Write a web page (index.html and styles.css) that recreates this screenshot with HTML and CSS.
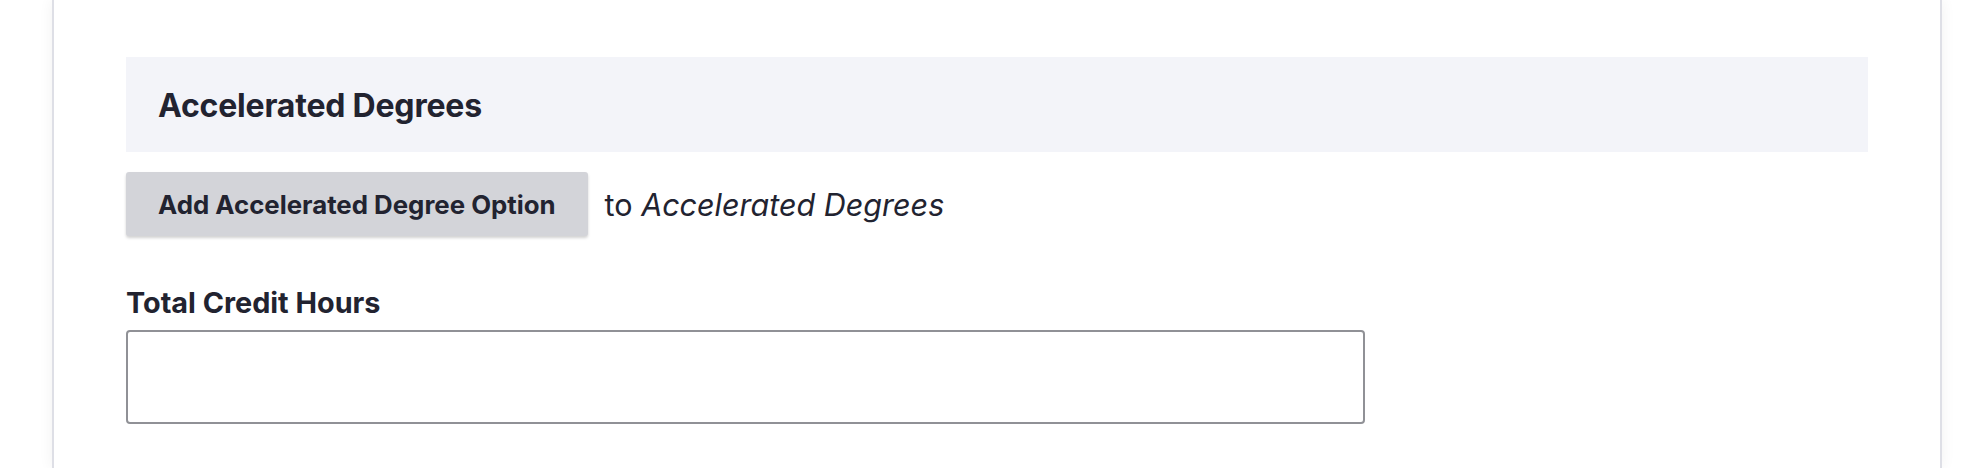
FILE: index.html
```html
<!DOCTYPE html>
<html lang="en">
<head>
    <meta charset="UTF-8">
    <meta name="viewport" content="width=device-width, initial-scale=1.0">
    <title>Accelerated Degrees</title>
    <link rel="stylesheet" href="styles.css">
</head>
<body>
    <!-- Edit form card -->
    <div class="card">

        <!-- Paragraph field group -->
        <div class="field-group">
            <div class="field-group-title">Accelerated Degrees</div>
        </div>

        <!-- Add more row -->
        <div class="add-more">
            <button class="button" type="button">Add Accelerated Degree Option</button>
            <span class="add-more-target">to <em>Accelerated Degrees</em></span>
        </div>

        <!-- Credit hours -->
        <div class="form-item">
            <label class="form-label" for="credit-hours">Total Credit Hours</label>
            <input class="form-text" type="text" id="credit-hours">
        </div>
    </div>
</body>
</html>
```

FILE: styles.css
```css
/* General Styling */
* {
    box-sizing: border-box;
    margin: 0;
    padding: 0;
}

body {
    min-height: 100vh;
    background: #ffffff;
    font-family: 'Inter', 'Noto Sans', sans-serif;
    color: #222330;
    overflow: hidden;
}

/* Card */
.card {
    min-height: 100vh;
    margin: 0 30px 0 52px;
    padding: 57px 72px 0 72px;
    background: #ffffff;
    border-left: 2px solid #dedfe6;
    border-right: 2px solid #dedfe6;
    box-shadow: 0 0 14px rgba(0, 0, 0, 0.06);
}

/* Field group heading */
.field-group {
    background: #f3f4f9;
    padding: 31px 32px 28px;
}

.field-group-title {
    font-size: 32px;
    font-weight: 700;
    line-height: 36px;
    letter-spacing: -0.2px;
}

/* Add more row */
.add-more {
    display: flex;
    align-items: center;
    gap: 17px;
    margin-top: 20px;
}

.button {
    height: 64px;
    padding: 0 32px;
    font-family: inherit;
    font-size: 25.8px;
    font-weight: 700;
    color: #222330;
    background: #d3d4d9;
    border: 0;
    border-radius: 3px;
    box-shadow: 0 2px 3px rgba(0, 0, 0, 0.18);
    cursor: pointer;
}

.add-more-target {
    font-size: 30.5px;
}

.add-more-target em {
    font-style: italic;
}

/* Form item */
.form-item {
    margin-top: 50px;
}

.form-label {
    display: block;
    font-size: 28.8px;
    font-weight: 700;
    line-height: 34px;
    margin-bottom: 10px;
}

.form-text {
    display: block;
    width: 1239px;
    height: 94px;
    padding: 0 16px;
    font-family: inherit;
    font-size: 21.3px;
    border: 2px solid #909196;
    border-radius: 4px;
    background: #ffffff;
}
```
